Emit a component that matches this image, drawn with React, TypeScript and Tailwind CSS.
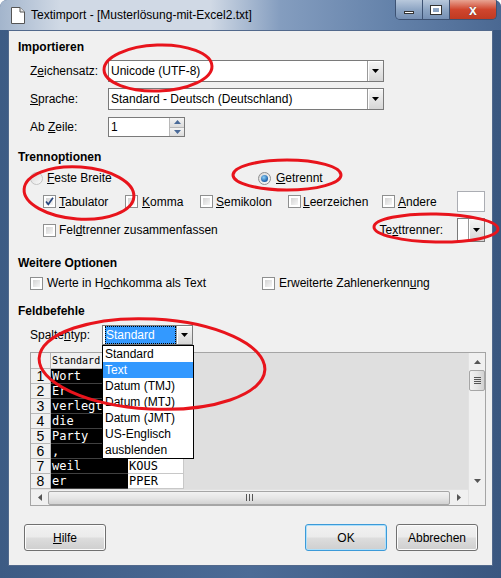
import React from 'react';

// Windows 7 "Textimport" dialog with red annotation ellipses

function Tri() {
  return (
    <svg width="7" height="4" viewBox="0 0 7 4">
      <polygon points="0,0 7,0 3.5,4" fill="#000" />
    </svg>
  );
}

function Combo(props: { value?: string; className: string; selected?: boolean }) {
  return (
    <div className={`flex border border-[#7a7a7a] bg-white ${props.className}`}>
      <div className="flex-1 flex items-center pl-[2px] overflow-hidden whitespace-nowrap">
        {props.selected ? (
          <span className="h-full w-full flex items-center pl-[1px] bg-[#3399ff] text-white outline-1 outline-dotted outline-[#000] -outline-offset-1">
            {props.value}
          </span>
        ) : (
          props.value
        )}
      </div>
      <div className="w-[16px] border-l border-[#9a9a9a] bg-[linear-gradient(#f6f6f6,#e6e6e6_50%,#d6d6d6)] shadow-[inset_1px_1px_0_#ffffff] flex items-center justify-center">
        <Tri />
      </div>
    </div>
  );
}

function Check(props: { checked?: boolean }) {
  return (
    <span className="relative inline-block w-[13px] h-[13px] shrink-0 border border-[#8e8f8f] bg-white">
      <span className="absolute inset-[2px] bg-linear-to-br from-[#d4d4d4] to-[#f6f6f6]" />
      {props.checked && (
        <svg className="absolute inset-0" width="11" height="11" viewBox="0 0 11 11">
          <path d="M2 5.5 L4.3 8.3 L9 1.8" stroke="#27457d" strokeWidth="1.7" fill="none" />
        </svg>
      )}
    </span>
  );
}

function Radio(props: { checked?: boolean; disabled?: boolean }) {
  return (
    <span
      className={`relative inline-flex items-center justify-center w-[13px] h-[13px] shrink-0 rounded-full border ${
        props.disabled ? 'border-[#c4c4c4]' : 'border-[#8e8f8f]'
      } bg-linear-to-br from-[#d8d8d8] to-[#fafafa]`}
    >
      {props.checked && (
        <span className="w-[7px] h-[7px] rounded-full bg-[radial-gradient(circle_at_40%_35%,#8cd0f8,#1b5fa8_70%)]" />
      )}
    </span>
  );
}

function Btn(props: { children: React.ReactNode; focus?: boolean }) {
  return (
    <div
      className={`h-[27px] w-[82px] rounded-[3px] border ${
        props.focus ? 'border-[#3c9ad8] shadow-[inset_0_0_0_1px_#aee0fb]' : 'border-[#707070] shadow-[inset_0_0_0_1px_#fcfcfc]'
      } bg-[linear-gradient(#f2f2f2,#ebebeb_48%,#dddddd_52%,#cfcfcf)] flex items-center justify-center text-[12px]`}
    >
      {props.children}
    </div>
  );
}

const rows = ['Wort', 'Er', 'verlegt', 'die', 'Party', ',', 'weil', 'er'];
const col2 = ['', '', '', '', '', '', 'KOUS', 'PPER'];
const types = ['Standard', 'Text', 'Datum (TMJ)', 'Datum (MTJ)', 'Datum (JMT)', 'US-Englisch', 'ausblenden'];

function Preview() {
  return (
    <div className="ml-[12px] mt-[7px] w-[456px] h-[154px] border border-[#a5a5a5] flex">
      <div className="flex-1 flex flex-col">
        <div className="flex-1 bg-[#dfdfdf] overflow-hidden">
          <div className="flex h-[16px] text-[10px] font-['DejaVu_Sans_Mono',monospace]">
            <div className="w-[20px] border-r border-b border-[#b8b8b8] bg-[#f0f0f0]" />
            <div className="w-[77px] border-r border-b border-[#b8b8b8] bg-[#f0f0f0] flex items-center pl-[1px]">Standard</div>
            <div className="w-[56px] border-r border-b border-[#b8b8b8] bg-[#f0f0f0]" />
          </div>
          {rows.map((r, i) => (
            <div key={i} className="flex h-[15px]">
              <div className="w-[20px] border-r border-b border-[#b8b8b8] bg-[#f0f0f0] text-center text-[14px] leading-[14px] overflow-hidden">
                {i + 1}
              </div>
              <div className="w-[77px] border-b border-[#404040] bg-black text-white font-['DejaVu_Sans_Mono',monospace] text-[12px] leading-[14px] pl-[1px] overflow-hidden">
                {r}
              </div>
              <div className="w-[56px] border-r border-b border-[#c8c8c8] bg-white font-['DejaVu_Sans_Mono',monospace] text-[12px] leading-[14px] pl-[1px] overflow-hidden">
                {col2[i]}
              </div>
            </div>
          ))}
        </div>
        {/* horizontal scrollbar */}
        <div className="h-[16px] bg-[#f0f0f0] border-t border-[#e2e2e2] flex items-center">
          <div className="w-[17px] flex items-center justify-center">
            <svg width="4" height="7" viewBox="0 0 4 7"><polygon points="4,0 4,7 0,3.5" fill="#555" /></svg>
          </div>
          <div className="flex-1 h-[14px] rounded-[2px] border border-[#a6a6a6] bg-[linear-gradient(#f2f2f2,#e6e6e6_50%,#d2d2d2)] flex items-center justify-center gap-[2px]">
            <span className="w-[1px] h-[7px] bg-[#555]" />
            <span className="w-[1px] h-[7px] bg-[#555]" />
            <span className="w-[1px] h-[7px] bg-[#555]" />
          </div>
          <div className="w-[18px] flex items-center justify-center">
            <svg width="4" height="7" viewBox="0 0 4 7"><polygon points="0,0 0,7 4,3.5" fill="#555" /></svg>
          </div>
        </div>
      </div>
      {/* vertical scrollbar */}
      <div className="w-[17px] flex flex-col border-l border-[#e2e2e2] bg-[#f0f0f0]">
        <div className="h-[17px] flex items-center justify-center">
          <svg width="7" height="4" viewBox="0 0 7 4"><polygon points="0,4 7,4 3.5,0" fill="#555" /></svg>
        </div>
        <div className="h-[21px] rounded-[2px] border border-[#a6a6a6] bg-[linear-gradient(90deg,#f2f2f2,#e6e6e6_50%,#d2d2d2)] flex flex-col items-center justify-center gap-[1px]">
          <span className="w-[7px] h-[1px] bg-[#555]" />
          <span className="w-[7px] h-[1px] bg-[#555]" />
          <span className="w-[7px] h-[1px] bg-[#555]" />
          <span className="w-[7px] h-[1px] bg-[#555]" />
        </div>
        <div className="flex-1" />
        <div className="h-[17px] flex items-center justify-center">
          <svg width="7" height="4" viewBox="0 0 7 4"><polygon points="0,0 7,0 3.5,4" fill="#555" /></svg>
        </div>
        <div className="h-[16px] bg-[#f0f0f0]" />
      </div>
    </div>
  );
}

export default function App() {
  return (
    <div className="relative w-[501px] h-[578px] overflow-hidden font-['Liberation_Sans',Arial,sans-serif] text-[12px] text-black bg-[linear-gradient(90deg,#3d5b84,#4b6b96_50%,#3a5780)] rounded-t-[7px]">
      {/* title bar */}
      <div className="relative h-[30px] flex items-center bg-[linear-gradient(90deg,#a3b5cc,#d0d9e5_12%,#d0d9e5_42%,#849dbf_56%,#6482aa_78%,#4a6892)]">
        <svg className="ml-[11px]" width="14" height="17" viewBox="0 0 14 17">
          <path d="M0.5 0.5 H9 L13.5 5 V16.5 H0.5 Z" fill="#fff" stroke="#555" />
          <path d="M9 0.5 V5 H13.5" fill="#e8e8e8" stroke="#555" />
        </svg>
        <span className="ml-[6px] text-[12px] text-[#000]">Textimport - [Musterlösung-mit-Excel2.txt]</span>
        <div className="absolute right-[4px] top-0 flex h-[20px] rounded-b-[5px] border border-t-0 border-[#3d5273] overflow-hidden">
          <div className="w-[27px] flex items-center justify-center bg-[linear-gradient(#b8c8dc,#8ea6c4_50%,#7690b4)] border-r border-[#3d5273]">
            <span className="w-[10px] h-[3px] bg-white border border-[#333] mt-[5px]" />
          </div>
          <div className="w-[27px] flex items-center justify-center bg-[linear-gradient(#b8c8dc,#8ea6c4_50%,#7690b4)] border-r border-[#3d5273]">
            <span className="w-[10px] h-[8px] border-2 border-white outline-1 outline-[#333]" />
          </div>
          <div className="w-[46px] flex items-center justify-center bg-[linear-gradient(#e8a493,#d0462e_50%,#c03a22)]">
            <span className="text-white font-bold text-[14px] leading-none [text-shadow:0_0_1px_#333]">x</span>
          </div>
        </div>
      </div>

      {/* client area */}
      <div className="relative mx-[8px] h-[536px] border border-[#52698c] bg-[#f0f0f0] pl-[9px] pr-[7px] flex flex-col">
        <div className="mt-[7px] h-[18px] flex items-center font-bold">Importieren</div>
        <div className="mt-[4px] h-[22px] flex items-center">
          <span className="ml-[12px] w-[78px]">
            Z<u>e</u>ichensatz:
          </span>
          <Combo value="Unicode (UTF-8)" className="w-[276px] h-[22px]" />
        </div>
        <div className="mt-[6px] h-[22px] flex items-center">
          <span className="ml-[12px] w-[78px]">
            <u>S</u>prache:
          </span>
          <Combo value="Standard - Deutsch (Deutschland)" className="w-[276px] h-[22px]" />
        </div>
        <div className="mt-[7px] h-[20px] flex items-center">
          <span className="ml-[12px] w-[78px]">
            Ab <u>Z</u>eile:
          </span>
          <div className="w-[77px] h-[20px] flex border border-[#7a7a7a] bg-white">
            <div className="flex-1 flex items-center pl-[2px]">1</div>
            <div className="w-[15px] flex flex-col border-l border-[#b8b8b8]">
              <div className="flex-1 flex items-center justify-center bg-[linear-gradient(#f4f4f4,#dcdcdc)] border-b border-[#b8b8b8]">
                <svg width="7" height="4" viewBox="0 0 7 4"><polygon points="0,4 7,4 3.5,0" fill="#4a6a98" /></svg>
              </div>
              <div className="flex-1 flex items-center justify-center bg-[linear-gradient(#f4f4f4,#dcdcdc)]">
                <svg width="7" height="4" viewBox="0 0 7 4"><polygon points="0,0 7,0 3.5,4" fill="#4a6a98" /></svg>
              </div>
            </div>
          </div>
        </div>

        <div className="mt-[11px] h-[18px] flex items-center font-bold">Trennoptionen</div>
        <div className="mt-[4px] h-[16px] flex items-center">
          <div className="ml-[12px] w-[228px] flex items-center gap-[4px]">
            <Radio disabled />
            <span>
              <u>F</u>este Breite
            </span>
          </div>
          <div className="flex items-center gap-[5px]">
            <Radio checked />
            <span>
              <u>G</u>etrennt
            </span>
          </div>
        </div>
        <div className="mt-[5px] h-[21px] flex items-center">
          <div className="ml-[25px] w-[82px] flex items-center gap-[3px]">
            <Check checked />
            <span>
              <u>T</u>abulator
            </span>
          </div>
          <div className="w-[75px] flex items-center gap-[4px]">
            <Check />
            <span>
              <u>K</u>omma
            </span>
          </div>
          <div className="w-[88px] flex items-center gap-[3px]">
            <Check />
            <span>
              <u>S</u>emikolon
            </span>
          </div>
          <div className="w-[94px] flex items-center gap-[2px]">
            <Check />
            <span>
              <u>L</u>eerzeichen
            </span>
          </div>
          <div className="w-[75px] flex items-center gap-[3px]">
            <Check />
            <span>
              <u>A</u>ndere
            </span>
          </div>
          <div className="w-[28px] h-[21px] border border-[#abadb3] bg-white" />
        </div>
        <div className="mt-[6px] h-[24px] flex items-center">
          <div className="ml-[25px] flex-1 flex items-center gap-[3px]">
            <Check />
            <span>
              Fel<u>d</u>trenner zusammenfassen
            </span>
          </div>
          <span className="mr-[14px]">
            Te<u>x</u>ttrenner:
          </span>
          <Combo className="w-[28px] h-[24px]" />
        </div>

        <div className="mt-[12px] h-[18px] flex items-center font-bold">Weitere Optionen</div>
        <div className="mt-[3px] h-[16px] flex items-center">
          <div className="ml-[12px] w-[232px] flex items-center gap-[4px]">
            <Check />
            <span>
              Werte in H<u>o</u>chkomma als Text
            </span>
          </div>
          <div className="flex items-center gap-[4px]">
            <Check />
            <span>
              Erweiterte Zahlenerkenn<u>u</u>ng
            </span>
          </div>
        </div>

        <div className="mt-[11px] h-[18px] flex items-center font-bold">Feldbefehle</div>
        <div className="mt-[5px] h-[20px] flex items-center relative z-10">
          <span className="ml-[12px] w-[72px]">
            Spalte<u>n</u>typ:
          </span>
          <div className="relative">
            <Combo value="Standard" selected className="w-[91px] h-[20px]" />
            {/* open dropdown list */}
            <div className="absolute left-0 top-full w-[92px] border border-black bg-white">
              {types.map((t, i) => (
                <div
                  key={t}
                  className={`h-[16px] leading-[16px] pl-[2px] ${i === 1 ? 'bg-[#3399ff] text-white' : ''}`}
                >
                  {t}
                </div>
              ))}
            </div>
          </div>
        </div>

        <Preview />

        <div className="mt-[18px] flex items-center">
          <div className="ml-[6px]">
            <Btn>
              <u>H</u>ilfe
            </Btn>
          </div>
          <div className="ml-auto mr-[9px]">
            <Btn focus>OK</Btn>
          </div>
          <div className="mr-[7px]">
            <Btn>Abbrechen</Btn>
          </div>
        </div>
      </div>

      {/* red annotation ellipses */}
      <svg className="absolute inset-0 pointer-events-none z-20" width="501" height="578" viewBox="0 0 501 578">
        <g fill="none" stroke="#e8141c" strokeWidth="3">
          <ellipse cx="158" cy="68" rx="54" ry="23" transform="rotate(-2 158 68)" />
          <ellipse cx="79" cy="193" rx="55" ry="26" transform="rotate(4 79 193)" />
          <ellipse cx="287" cy="175" rx="54" ry="15" />
          <ellipse cx="436" cy="228" rx="62" ry="14" transform="rotate(1 436 228)" />
          <ellipse cx="152" cy="364" rx="113" ry="45" transform="rotate(3 152 364)" />
        </g>
      </svg>
    </div>
  );
}
